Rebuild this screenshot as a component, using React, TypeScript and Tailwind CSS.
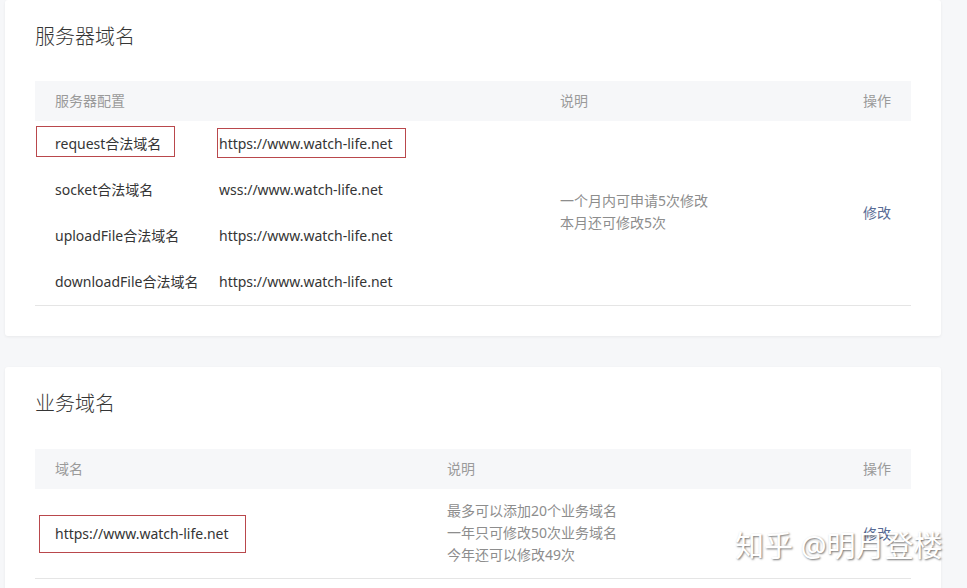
import React from "react";

const font = { fontFamily: '"Noto Sans", "Noto Sans CJK SC", sans-serif' };

function RedBox({ className }: { className: string }) {
  return <div className={`absolute border border-[#b9484c] pointer-events-none ${className}`} />;
}

export default function App() {
  const rows = [
    { label: "request合法域名", url: "https://www.watch-life.net", boxed: true },
    { label: "socket合法域名", url: "wss://www.watch-life.net" },
    { label: "uploadFile合法域名", url: "https://www.watch-life.net" },
    { label: "downloadFile合法域名", url: "https://www.watch-life.net" },
  ];
  return (
    <div
      className="w-[967px] h-[588px] overflow-hidden bg-[#f6f7f9] pl-[5px] text-[14px] text-[#353535] relative"
      style={font}
    >
      <div className="w-[936px] flex flex-col gap-[31px]">
        {/* Card 1 */}
        <div className="bg-white rounded-[3px] shadow-[0_1px_3px_rgba(0,0,0,0.06)] pt-[23px] pb-[30px] px-[30px]">
          <h2 className="text-[20px] leading-[28px] font-light text-[#353535]">服务器域名</h2>
          <div className="mt-[30px]">
            <div className="h-[40px] bg-[#f6f7f9] flex items-center px-5 text-[#9a9a9a] text-[14px] leading-[20px]">
              <div className="w-[505px]">服务器配置</div>
              <div className="flex-1">说明</div>
              <div>操作</div>
            </div>
            <div className="flex px-5 border-b border-[#e5e5e5]">
              <div className="w-[505px] flex flex-col">
                {rows.map((r) => (
                  <div key={r.label} className="h-[46px] flex items-center leading-[20px]">
                    <div className="w-[164px] relative">
                      {r.boxed && <RedBox className="left-[-19px] top-[-8px] w-[139px] h-[31px]" />}
                      {r.label}
                    </div>
                    <div className="relative">
                      {r.boxed && <RedBox className="left-[-2px] top-[-6px] w-[189px] h-[30px]" />}
                      {r.url}
                    </div>
                  </div>
                ))}
              </div>
              <div className="flex-1 flex flex-col justify-center text-[#8d8d8d] leading-[22px] pb-[2px]">
                <div>一个月内可申请5次修改</div>
                <div>本月还可修改5次</div>
              </div>
              <div className="flex items-center text-[#576b95] pb-[2px]">修改</div>
            </div>
          </div>
        </div>

        {/* Card 2 */}
        <div className="bg-white rounded-[3px] shadow-[0_1px_3px_rgba(0,0,0,0.06)] pt-[23px] pb-[30px] px-[30px]">
          <h2 className="text-[20px] leading-[28px] font-light text-[#353535]">业务域名</h2>
          <div className="mt-[31px]">
            <div className="h-[40px] bg-[#f6f7f9] flex items-center px-5 text-[#9a9a9a] text-[14px] leading-[20px]">
              <div className="w-[392px]">域名</div>
              <div className="flex-1">说明</div>
              <div>操作</div>
            </div>
            <div className="flex px-5 h-[90px] border-b border-[#e5e5e5]">
              <div className="w-[392px] flex items-center leading-[20px]">
                <div className="relative">
                  <RedBox className="left-[-16px] top-[-9px] w-[207px] h-[38px]" />
                  https://www.watch-life.net
                </div>
              </div>
              <div className="flex-1 flex flex-col justify-center text-[#8d8d8d] leading-[22px] pb-[1px]">
                <div>最多可以添加20个业务域名</div>
                <div>一年只可修改50次业务域名</div>
                <div>今年还可以修改49次</div>
              </div>
              <div className="flex items-center text-[#576b95] pb-[1px]">修改</div>
            </div>
          </div>
        </div>
      </div>

      {/* watermark */}
      <div className="absolute left-[735px] top-[529px] text-[29px] leading-[34px] text-white whitespace-nowrap [text-shadow:1px_1px_2px_rgba(0,0,0,0.55)]">
        知乎 @明月登楼
      </div>
    </div>
  );
}
